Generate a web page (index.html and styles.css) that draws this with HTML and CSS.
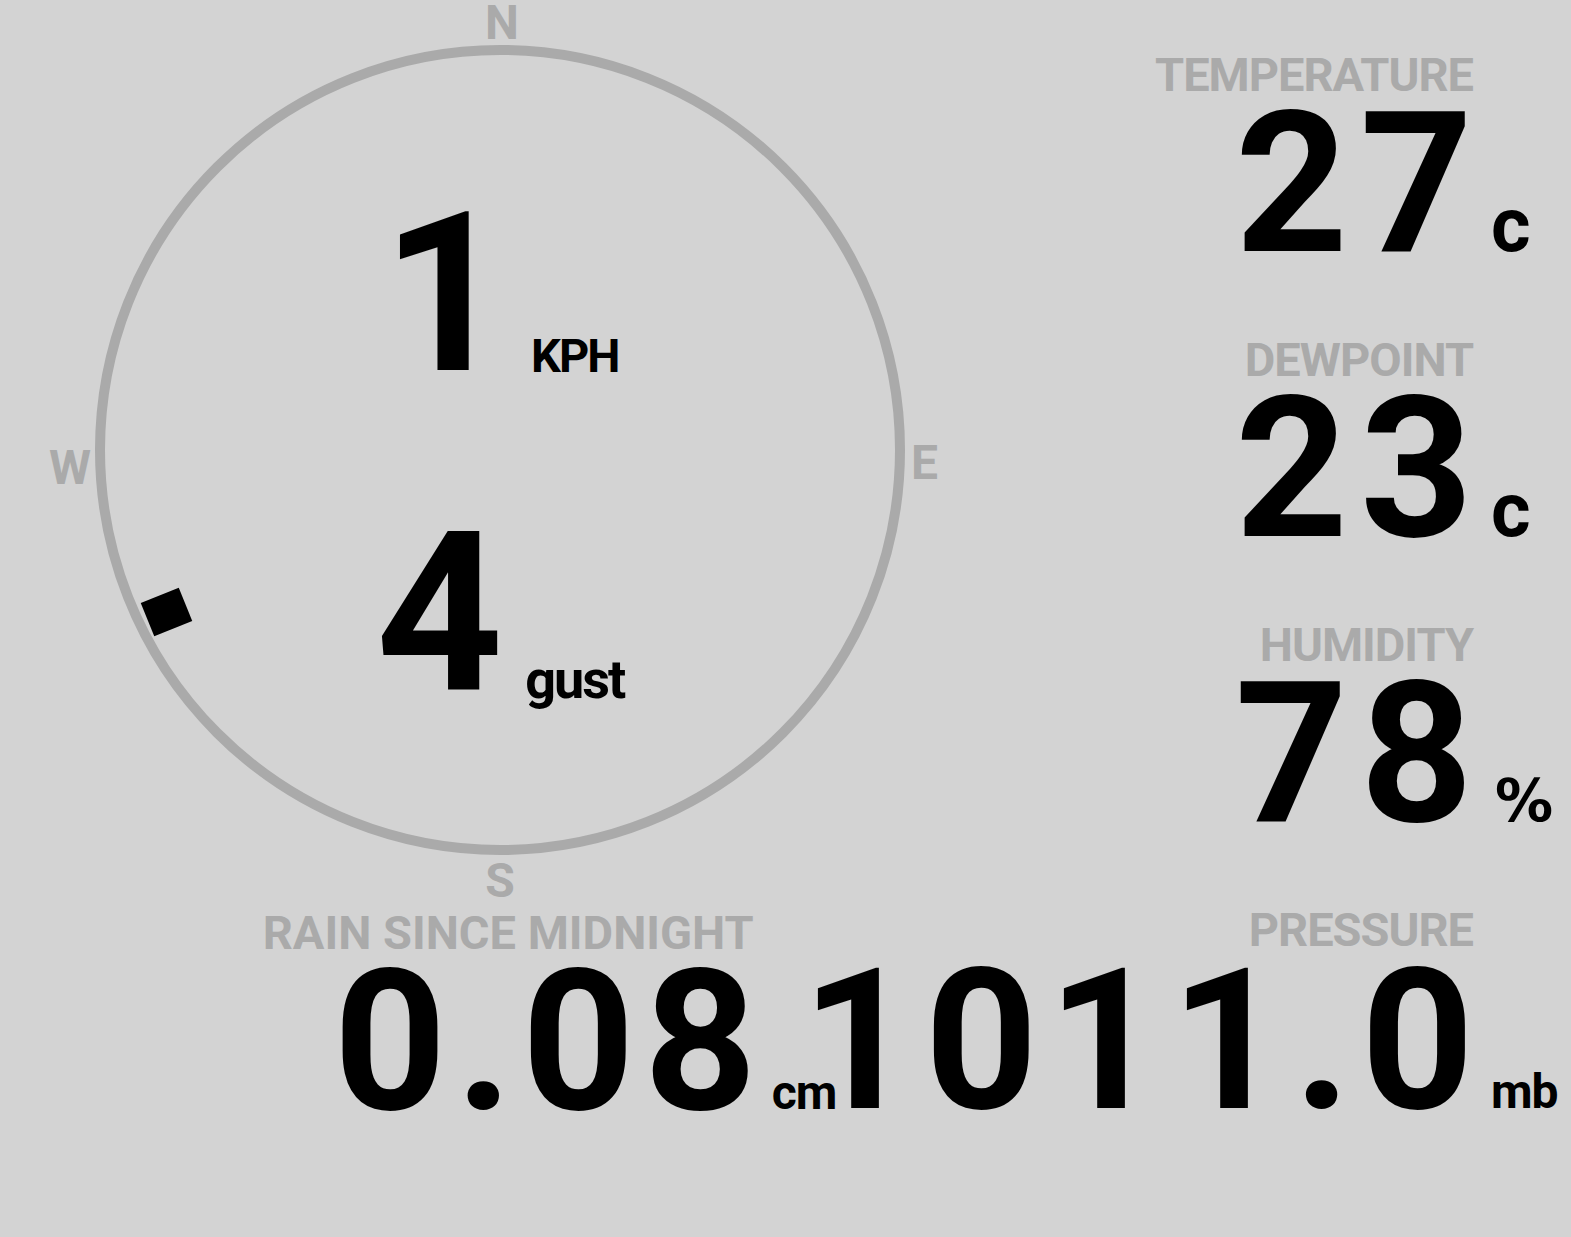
FILE: index.html
```html
<!DOCTYPE html>
<html lang="en">
<head>
  <meta charset="UTF-8">
  <meta name="viewport" content="width=device-width, initial-scale=1.0">
  <title>Weather</title>
  <link rel="stylesheet" href="styles.css">
</head>
<body>
  <div class="station">
    <div class="top">
      <div class="compass">
        <span class="point north">N</span>
        <span class="point east">E</span>
        <span class="point south">S</span>
        <span class="point west">W</span>
        <div class="vane"></div>
        <div class="speed">
          <div class="reading"><span class="big">1</span><span class="unit kph">KPH</span></div>
          <div class="reading"><span class="big">4</span><span class="unit gust">gust</span></div>
        </div>
      </div>

      <div class="stats">
        <div class="stat">
          <p class="label">TEMPERATURE</p>
          <p class="value">27</p>
          <span class="unit deg">c</span>
        </div>
        <div class="stat">
          <p class="label">DEWPOINT</p>
          <p class="value">23</p>
          <span class="unit deg">c</span>
        </div>
        <div class="stat">
          <p class="label">HUMIDITY</p>
          <p class="value">78</p>
          <span class="unit pct">%</span>
        </div>
      </div>
    </div>

    <div class="bottom">
      <div class="stat rain">
        <p class="label">RAIN SINCE MIDNIGHT</p>
        <p class="value">0.08</p>
        <span class="unit small">cm</span>
      </div>
      <div class="stat pressure">
        <p class="label">PRESSURE</p>
        <p class="value">1011.0</p>
        <span class="unit small">mb</span>
      </div>
    </div>
  </div>
</body>
</html>
```

FILE: styles.css
```css
* {
  font-family: Roboto, "Liberation Sans", sans-serif;
  font-weight: bold;
}

html {
  background-color: #d3d3d3;
}

body {
  margin: 0;
  color: black;
}

p {
  margin: 0;
}

.top {
  display: flex;
  align-items: flex-start;
}

/* wind */
.compass {
  position: relative;
  box-sizing: border-box;
  width: 810px;
  height: 810px;
  margin: 45px 0 0 95px;
  border: 10px solid #aaa;
  border-radius: 50%;
  display: flex;
  align-items: center;
  justify-content: center;
}

.point {
  position: absolute;
  color: #aaa;
  font-size: 48px;
  line-height: 48px;
}
.north {
  left: 397px;
  top: -56px;
  transform: translateX(-50%);
}
.south {
  left: 395px;
  top: 802px;
  transform: translateX(-50%);
}
.east {
  left: 806px;
  top: 384px;
}
.west {
  left: -35px;
  top: 389px;
  transform: translateX(-50%);
}

.vane {
  position: absolute;
  left: 41px;
  top: 539px;
  width: 41px;
  height: 36px;
  background-color: black;
  transform: rotate(-22deg);
}

.speed {
  display: flex;
  flex-direction: column;
  align-items: center;
  padding-top: 8px;
}

.reading {
  line-height: 1;
  white-space: nowrap;

  .big {
    font-size: 222px;
    line-height: 320px;
  }

  .unit {
    line-height: 1;
    margin-left: 22px;
  }
  .kph {
    font-size: 47px;
    letter-spacing: -2px;
    vertical-align: -2px;
  }
  .gust {
    font-size: 54px;
    letter-spacing: -2px;
    vertical-align: -8px;
  }
}

/* readings */
.stats {
  flex: 1;
  display: flex;
  flex-direction: column;
  align-items: flex-end;
  gap: 76px;
  padding-top: 55px;
}

.stat {
  display: grid;
  grid-template-columns: auto 98px;

  .label {
    grid-column: 1;
    text-align: right;
    color: #aaa;
    font-size: 47px;
    line-height: 40px;
    letter-spacing: -1px;
    margin-bottom: 9px;
    white-space: nowrap;
  }

  .value {
    grid-column: 1;
    grid-row: 2;
    text-align: right;
    font-size: 197px;
    line-height: 160px;
    letter-spacing: 12px;
    margin-right: -12px;
    white-space: nowrap;
    align-self: baseline;
  }

  .unit {
    grid-column: 2;
    grid-row: 2;
    align-self: baseline;
    padding-left: 18px;
    line-height: 1;
  }
  .deg {
    font-size: 76px;
  }
  .pct {
    font-family: "DejaVu Sans", sans-serif;
    font-size: 58px;
    padding-left: 22px;
  }
  .small {
    font-size: 48px;
    letter-spacing: -1px;
  }
}

.bottom {
  display: flex;
  justify-content: flex-end;
  margin-top: 55px;
}

.rain {
  margin-right: -50px;
  padding-top: 3px;

  .label {
    letter-spacing: 0;
  }
  .value {
    letter-spacing: 9px;
  }
}

.pressure .value {
  letter-spacing: 10px;
  margin-right: -11px;
}
```
